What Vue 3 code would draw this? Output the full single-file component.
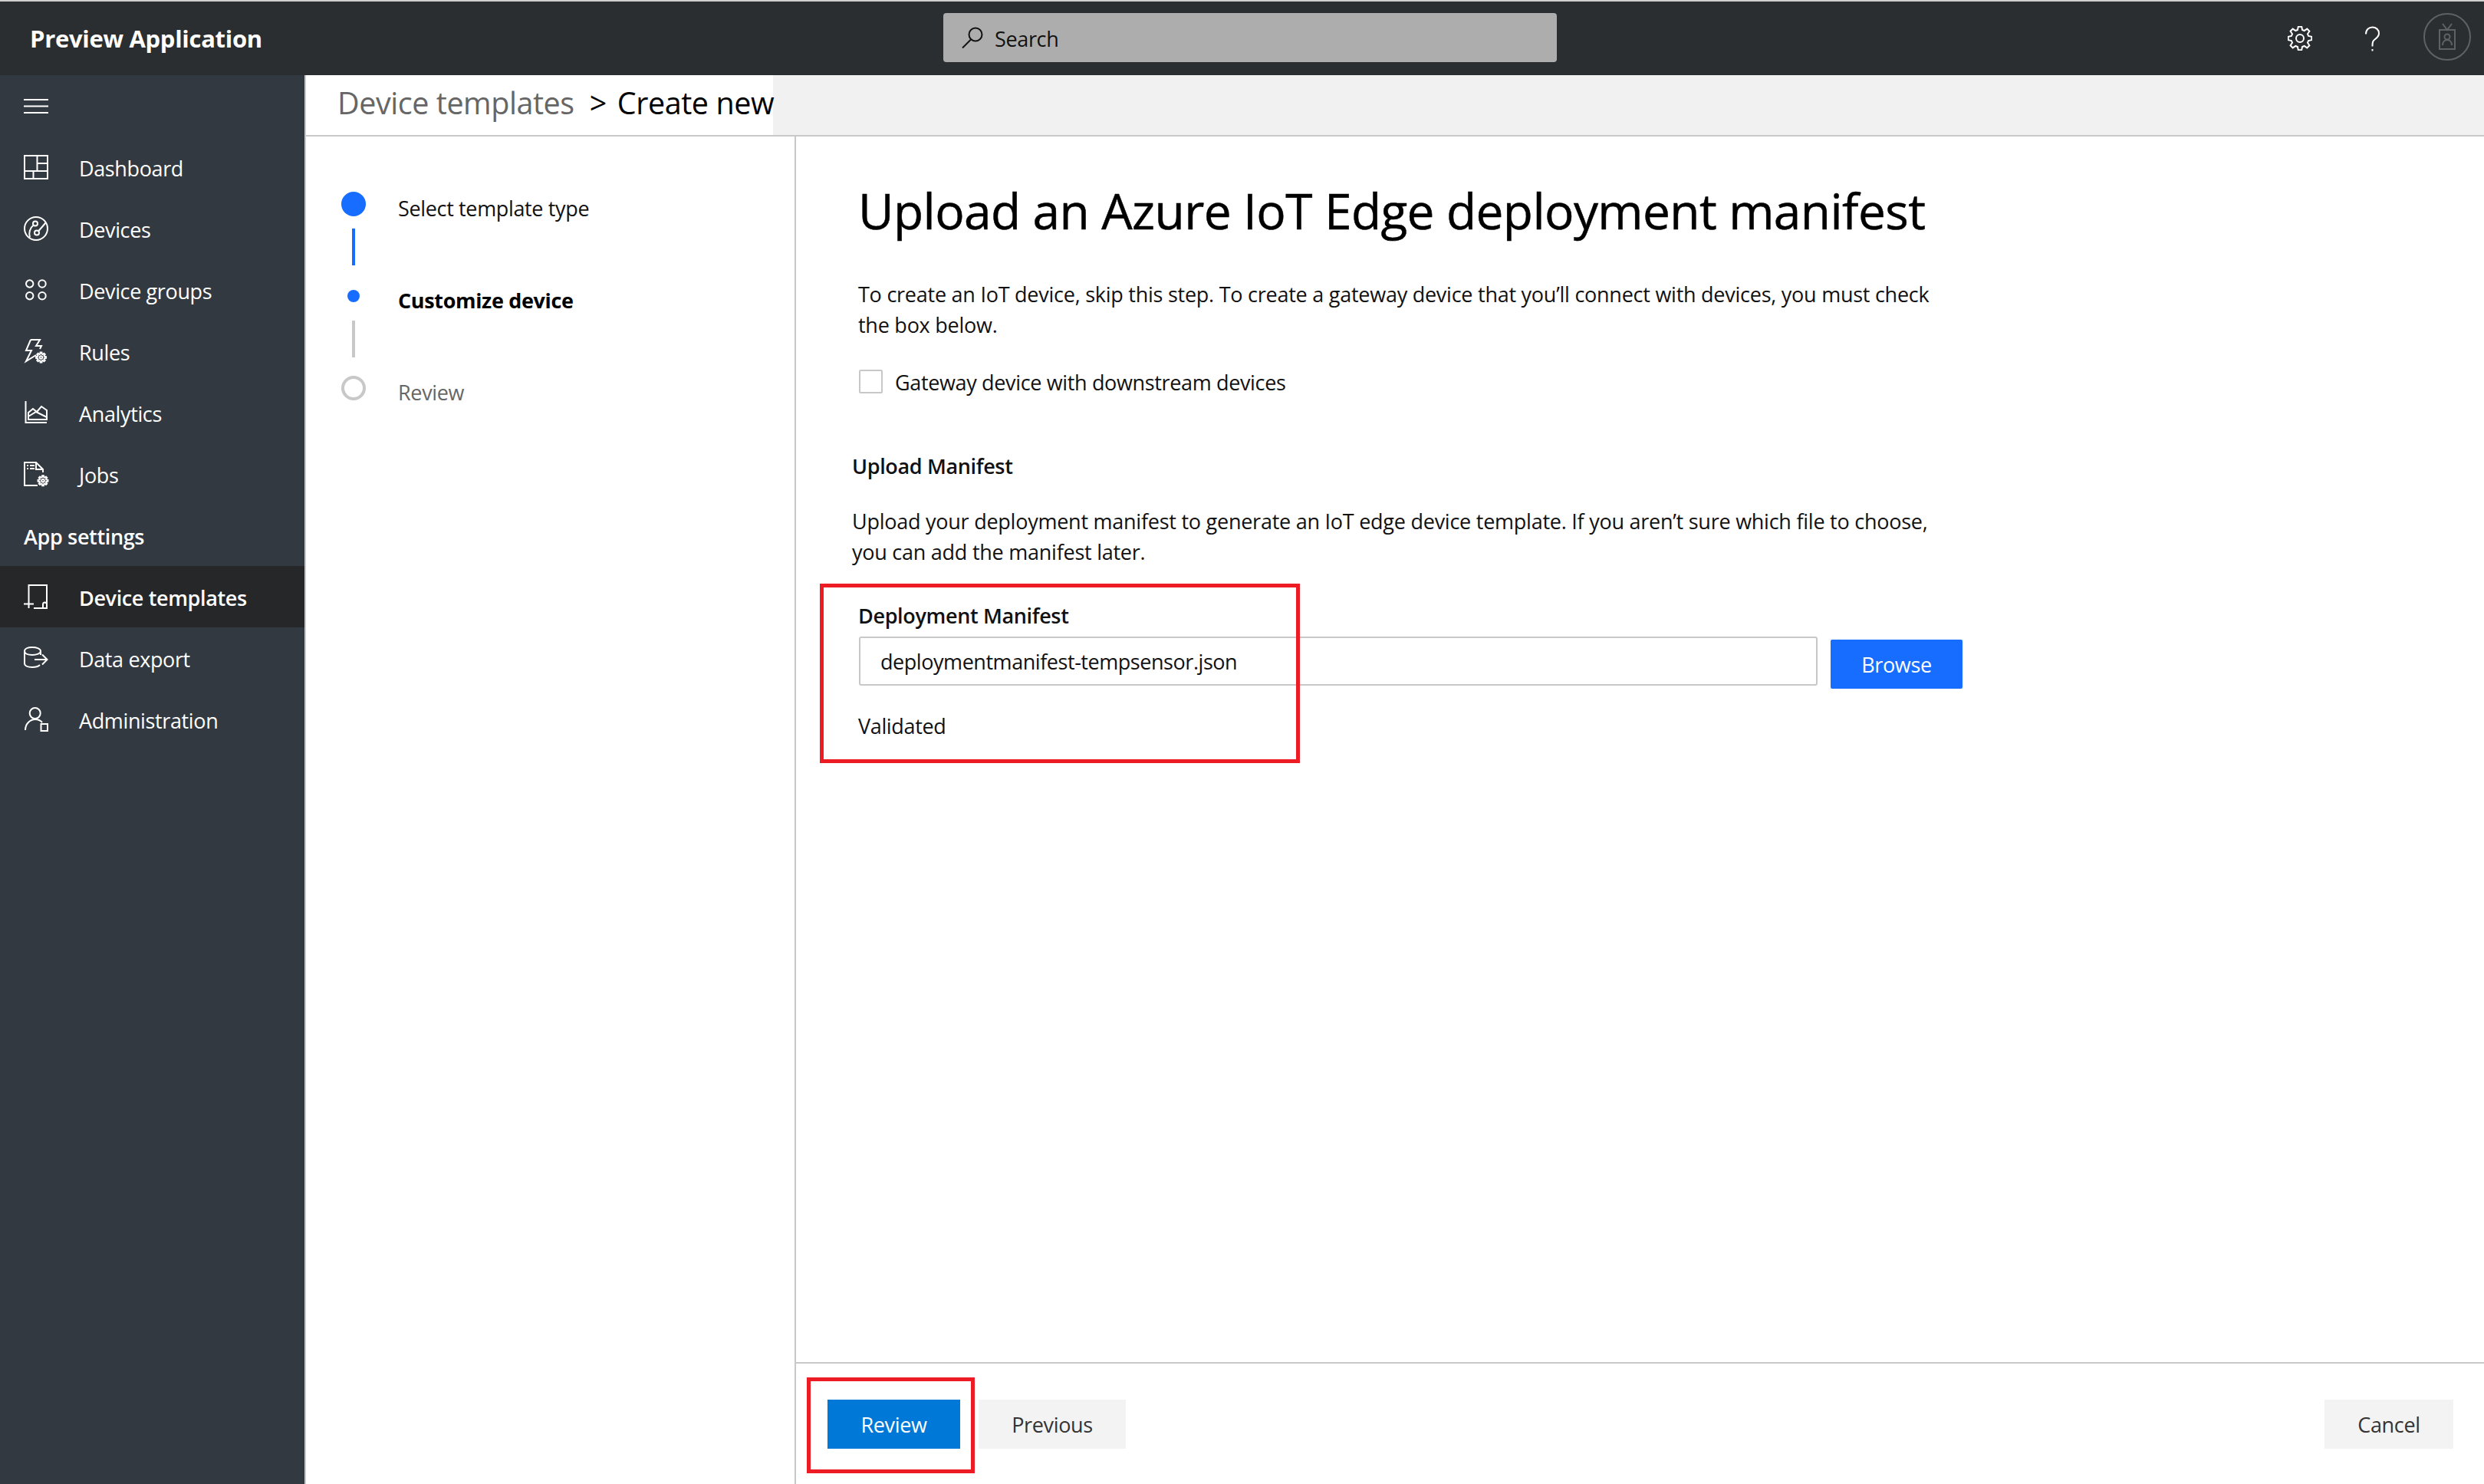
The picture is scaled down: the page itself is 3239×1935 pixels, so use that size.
<template>
  <div class="app">
    <header class="topbar">
      <div class="brand">Preview Application</div>
      <div class="search">
        <svg class="search-icon" viewBox="0 0 28 28">
          <circle cx="18" cy="10" r="8.5" />
          <path d="M12 16.500 L1 27.500" />
        </svg>
        <span class="search-text">Search</span>
      </div>
      <div class="top-actions">
        <svg class="top-gear" viewBox="0 0 32 32"><path :d="gearPath(16, 16, 15.5, 11.5, 8)" /><circle cx="16" cy="16" r="5" /></svg>
        <svg class="top-help" viewBox="0 0 20 32">
          <path d="M1 10 C1 4 5 1 9.500 1 C14 1 18 4 18 9 C18 13 15 15 12.500 17 C10 19 9.500 20.500 9.500 26" />
          <path d="M9.500 29.500 V32" />
        </svg>
        <div class="avatar">
          <svg viewBox="0 0 24 36">
            <rect x="2" y="9" width="20" height="25" />
            <path d="M6 1 L12 9 L18 1" />
            <circle cx="12" cy="18" r="3.500" />
            <path d="M6 29 C6 24 9 22 12 22 C15 22 18 24 18 29" />
          </svg>
        </div>
      </div>
    </header>

    <div class="shell">
      <nav class="sidebar">
        <div class="nav-row">
          <svg class="nav-icon" viewBox="0 0 32 32"><path d="M0 1 H32 M0 9.500 H32 M0 18 H32" transform="translate(0 7)" /></svg>
        </div>
        <template v-for="item in navItems" :key="item.label">
          <div v-if="item.heading" class="nav-heading">{{ item.label }}</div>
          <div v-else :class="['nav-row', { active: item.active }]">
            <svg class="nav-icon" viewBox="0 0 32 32">
              <path v-for="(d, i) in item.paths" :key="i" :d="d" />
            </svg>
            <span>{{ item.label }}</span>
          </div>
        </template>
      </nav>

      <div class="content">
        <div class="crumbs">
          <div class="crumbs-text">
            <span class="crumb-parent">Device templates</span>
            <span class="crumb-sep">&gt;</span>
            <span>Create new</span>
          </div>
        </div>

        <div class="wizard">
          <aside class="steps">
            <div v-for="step in steps" :key="step.label" :class="['step', step.state]">
              <div class="marker">
                <div class="dot"></div>
                <div v-if="step.line" class="line"></div>
              </div>
              <div class="step-label">{{ step.label }}</div>
            </div>
          </aside>

          <main class="panel">
            <div class="panel-body">
              <h1>Upload an Azure IoT Edge deployment manifest</h1>
              <p class="intro">
                To create an IoT device, skip this step. To create a gateway device that you’ll connect with devices, you must check<br />the box below.
              </p>
              <label class="check">
                <span class="box"></span>
                <span class="check-text">Gateway device with downstream devices</span>
              </label>

              <section class="upload">
                <h2>Upload Manifest</h2>
                <p>
                  Upload your deployment manifest to generate an IoT edge device template. If you aren’t sure which file to choose,<br />you can add the manifest later.
                </p>
              </section>

              <div class="field">
                <div class="field-label">Deployment Manifest</div>
                <div class="field-row">
                  <div class="input">deploymentmanifest-tempsensor.json</div>
                  <button class="browse">Browse</button>
                </div>
                <div class="status">Validated</div>
              </div>
            </div>

            <footer class="actions">
              <button class="btn primary">Review</button>
              <button class="btn prev">Previous</button>
              <button class="btn cancel">Cancel</button>
            </footer>

            <div class="callout callout-field"></div>
            <div class="callout callout-review"></div>
          </main>
        </div>
      </div>
    </div>
  </div>
</template>

<script setup>
// 圆转成 path，方便所有图标都用同一个数组渲染
function circle(cx, cy, r) {
  return `M${cx - r} ${cy} a${r} ${r} 0 1 0 ${r * 2} 0 a${r} ${r} 0 1 0 ${-r * 2} 0`;
}

function gearPath(cx, cy, outer, inner, teeth) {
  const step = (Math.PI * 2) / teeth;
  let d = "";
  for (let i = 0; i < teeth; i++) {
    const a = i * step - Math.PI / 2;
    const pts = [
      [inner, a - step * 0.34],
      [outer, a - step * 0.18],
      [outer, a + step * 0.18],
      [inner, a + step * 0.34],
    ];
    pts.forEach(([r, t], j) => {
      const x = (cx + r * Math.cos(t)).toFixed(2);
      const y = (cy + r * Math.sin(t)).toFixed(2);
      d += `${i === 0 && j === 0 ? "M" : "L"}${x} ${y} `;
    });
  }
  return d + "Z";
}

const navItems = [
  {
    label: "Dashboard",
    paths: ["M1 1 H31 V31 H1 Z", "M17.500 1 V21 M1 21 H31 M17.500 11 H31 M12.500 21 V31"],
  },
  {
    label: "Devices",
    paths: [
      circle(16, 16, 15),
      circle(15, 9.5, 3),
      circle(17, 21.5, 3),
      "M19 19.500 L29 8 M12.800 11.500 C8 15 6 22 8 27.500",
    ],
  },
  {
    label: "Device groups",
    paths: [circle(7.7, 8, 4.7), circle(24, 8, 4.7), circle(7.7, 23.7, 4.7), circle(24, 23.7, 4.7)],
  },
  {
    label: "Rules",
    paths: [
      "M9 1 L3 15 H10 L3 29 L16 21 M9 1 H21 L16 9 H23 L21 13",
      gearPath(22.5, 24, 6.5, 4.6, 8),
      circle(22.5, 24, 1.8),
    ],
  },
  {
    label: "Analytics",
    paths: [
      "M2.500 1 V29 H30",
      "M6 25 V16 L12 11 L17 15 L23 8 L30 13 V25 Z",
      "M6 21 L16 15 L30 22",
    ],
  },
  {
    label: "Jobs",
    paths: [
      "M18 31 H1 V1 H16 L25 10 V14 M16 1 V10 H25",
      "M4 5 H6 M8 5 H14 M4 9 H6 M8 9 H14",
      gearPath(25, 24.7, 6.5, 4.6, 8),
      circle(25, 24.7, 1.8),
    ],
  },
  { label: "App settings", heading: true },
  {
    label: "Device templates",
    active: true,
    paths: ["M6.500 19 V1 H30 V31 H13 M0 25.500 H13 M6.500 19 V31", "M25 31 V26 a2.500 2.500 0 0 1 5 0"],
  },
  {
    label: "Data export",
    paths: [
      "M1 7 C1 4 5 2 11 2 C17 2 22 4 22 7 C22 10 17 12 11 12 C5 12 1 10 1 7 V23 C1 26 5 28 11 28 C15 28 19 27 21 25",
      "M22 7 V12 M14 18 H30 M24 11.500 L30.500 18 L24 24.500",
    ],
  },
  {
    label: "Administration",
    paths: [
      circle(14.7, 8, 7),
      "M2 30 C2 22 8 16 15 16 C18 16 21.500 17 24 20",
      "M22.500 22 H31 V31 H22.500 Z",
    ],
  },
];

const steps = [
  { label: "Select template type", state: "done", line: true },
  { label: "Customize device", state: "current", line: true },
  { label: "Review", state: "todo", line: false },
];
</script>

<style scoped>
.app {
  height: 1935px;
  display: flex;
  flex-direction: column;
  overflow: hidden;
  font-family: "Open Sans", "Noto Sans", sans-serif;
  font-size: 27px;
  letter-spacing: -0.35px;
  line-height: 40px;
  color: #111;
  background: #fff;
}

.topbar {
  height: 96px;
  flex: none;
  display: flex;
  align-items: center;
  border-top: 2px solid #cfcfcf;
  background: #2b2e31;
}

.brand {
  width: 1230px;
  padding-left: 39px;
  box-sizing: border-box;
  color: #fff;
  font-size: 31px;
  font-weight: 700;
  letter-spacing: -0.3px;
}

.search {
  width: 800px;
  height: 64px;
  margin-top: -2px;
  padding-left: 24px;
  box-sizing: border-box;
  display: flex;
  align-items: center;
  gap: 15px;
  background: #adadad;
  border-radius: 4px;
}

.search-text {
  padding-top: 4px;
}

.search-icon {
  width: 28px;
  height: 28px;
  fill: none;
  stroke: #111;
  stroke-width: 2;
}

.top-actions {
  flex: 1;
  display: flex;
  align-items: center;
  justify-content: flex-end;
  padding-right: 17px;
}

.top-gear {
  width: 32px;
  height: 32px;
  margin-right: 69px;
  fill: none;
  stroke: #fff;
  stroke-width: 2;
}

.top-help {
  width: 20px;
  height: 33px;
  margin-right: 56px;
  fill: none;
  stroke: #fff;
  stroke-width: 2;
}

.avatar {
  width: 62px;
  height: 62px;
  margin-top: -4px;
  box-sizing: border-box;
  display: flex;
  align-items: center;
  justify-content: center;
  border: 2px solid #5f6265;
  border-radius: 50%;
}

.avatar svg {
  width: 24px;
  height: 36px;
  fill: none;
  stroke: #5f6265;
  stroke-width: 2;
}

.shell {
  flex: 1;
  display: flex;
  min-height: 0;
}

.sidebar {
  width: 399px;
  flex: none;
  box-sizing: border-box;
  border-right: 2px solid #c8c8c8;
  background: #323941;
  color: #fff;
}

.nav-row,
.nav-heading {
  height: 80px;
  display: flex;
  align-items: center;
  padding-left: 31px;
}

.nav-row span {
  margin-left: 40px;
  padding-top: 3px;
  letter-spacing: -0.37px;
}

.nav-row.active {
  background: #262729;
  font-weight: 600;
}

.nav-heading {
  padding-top: 3px;
  box-sizing: border-box;
  font-weight: 600;
}

.nav-icon {
  width: 32px;
  height: 32px;
  flex: none;
  fill: none;
  stroke: #fff;
  stroke-width: 2;
  overflow: visible;
}

.content {
  flex: 1;
  display: flex;
  flex-direction: column;
  min-width: 0;
}

.crumbs {
  height: 80px;
  flex: none;
  box-sizing: border-box;
  border-bottom: 2px solid #c8c8c8;
  background: #f1f1f1;
}

.crumbs-text {
  width: 609px;
  height: 78px;
  padding: 0 0 6px 41px;
  box-sizing: border-box;
  display: flex;
  align-items: center;
  background: #fff;
  color: #000;
  font-size: 39.5px;
  letter-spacing: -0.45px;
  white-space: nowrap;
}

.crumb-parent {
  color: #666;
}

.crumb-sep {
  margin: 0 14px 0 20px;
}

.wizard {
  flex: 1;
  display: flex;
  min-height: 0;
}

.steps {
  width: 639px;
  flex: none;
  box-sizing: border-box;
  padding: 72px 0 0 46px;
  border-right: 2px solid #c8c8c8;
}

.step {
  display: flex;
}

.marker {
  width: 32px;
  flex: none;
  display: flex;
  flex-direction: column;
  align-items: center;
}

.dot {
  width: 32px;
  height: 32px;
  box-sizing: border-box;
  border-radius: 50%;
  background: #166dff;
}

.line {
  width: 4px;
  height: 48px;
  background: #166dff;
}

.step-label {
  margin-left: 42px;
  margin-top: 2px;
}

.step.done {
  height: 128px;
}

.step.done .line {
  margin: 16px 0 32px;
}

.step.current {
  height: 112px;
}

.step.current .dot {
  width: 16px;
  height: 16px;
}

.step.current .line {
  margin-top: 24px;
  background: #c8c8c8;
}

.step.current .step-label {
  margin-top: -6px;
  font-weight: 700;
  color: #000;
}

.step.todo .dot {
  background: none;
  border: 4px solid #c8c8c8;
}

.step.todo .step-label {
  color: #666;
}

.panel {
  position: relative;
  flex: 1;
  display: flex;
  flex-direction: column;
  min-width: 0;
}

.panel-body {
  flex: 1;
  padding: 57px 0 0 81px;
}

h1 {
  margin: 0 0 49px;
  font-size: 64px;
  font-weight: 400;
  line-height: 80px;
  letter-spacing: -0.6px;
  color: #000;
  -webkit-text-stroke: 0.5px #000;
}

p {
  margin: 0;
  white-space: nowrap;
  letter-spacing: -0.25px;
}

.check {
  display: flex;
  align-items: center;
  gap: 16px;
  margin-top: 38px;
  height: 31px;
}

.check-text {
  padding-top: 3px;
}

.box {
  width: 31px;
  height: 31px;
  margin-left: 1px;
  box-sizing: border-box;
  border: 2px solid #c8c8c8;
  border-radius: 2px;
}

.upload {
  margin: 75px 0 0 -8px;
}

h2 {
  margin: 0 0 32px;
  font-size: 27px;
  font-weight: 600;
  line-height: 40px;
}

.field {
  margin-top: 43px;
}

.field-label {
  font-weight: 600;
  margin-bottom: 7px;
}

.field-row {
  display: flex;
  align-items: flex-start;
  gap: 17px;
}

.input {
  width: 1250px;
  height: 64px;
  margin-left: 1px;
  box-sizing: border-box;
  padding: 1px 0 0 26px;
  line-height: 60px;
  letter-spacing: -0.45px;
  border: 2px solid #c8c8c8;
  border-radius: 3px;
}

.browse {
  width: 172px;
  height: 64px;
  margin-top: 4px;
  padding-top: 3px;
  border: none;
  border-radius: 2px;
  background: #166dff;
  color: #fff;
  font: inherit;
  letter-spacing: inherit;
}

.status {
  margin-top: 29px;
}

.actions {
  height: 159px;
  flex: none;
  box-sizing: border-box;
  display: flex;
  align-items: flex-start;
  gap: 24px;
  padding: 47px 40px 0 41px;
  border-top: 2px solid #c8c8c8;
}

.btn {
  height: 64px;
  padding-top: 3px;
  border: none;
  background: #f3f3f3;
  color: #333;
  font: inherit;
  letter-spacing: inherit;
}

.btn.primary {
  width: 173px;
  background: #0078d7;
  color: #fff;
}

.btn.prev {
  width: 192px;
}

.btn.cancel {
  width: 168px;
  margin-left: auto;
}

.callout {
  position: absolute;
  box-sizing: border-box;
  border: 5px solid #ed1c24;
  pointer-events: none;
}

.callout-field {
  left: 31px;
  top: 583px;
  width: 626px;
  height: 234px;
}

.callout-review {
  left: 14px;
  top: 1618px;
  width: 219px;
  height: 125px;
}
</style>

<style>
body {
  background: #fff;
}
</style>
